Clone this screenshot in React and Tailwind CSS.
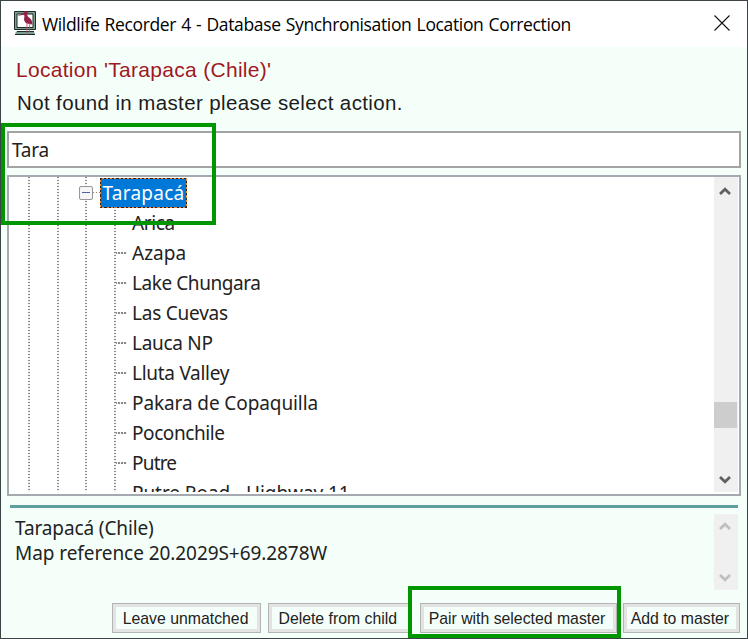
import React from "react";

const places = [
  { name: "Arica", spacing: "tracking-[-0.35px]" },
  { name: "Azapa", spacing: "tracking-[0px]" },
  { name: "Lake Chungara", spacing: "tracking-[-0.43px]" },
  { name: "Las Cuevas", spacing: "tracking-[-0.23px]" },
  { name: "Lauca NP", spacing: "tracking-[-0.3px]" },
  { name: "Lluta Valley", spacing: "tracking-[-0.28px]" },
  { name: "Pakara de Copaquilla", spacing: "tracking-[-0.1px]" },
  { name: "Poconchile", spacing: "tracking-[-0.42px]" },
  { name: "Putre", spacing: "tracking-[-0.8px]" },
  { name: "Putre Road - Highway 11", spacing: "tracking-[-0.07px]" },
];

const dotsY =
  "bg-[repeating-linear-gradient(to_bottom,#8a8a8a_0_1.5px,#f4f4f4_1.5px_3px)]";
const dotsX =
  "bg-[repeating-linear-gradient(to_right,#8a8a8a_0_1.5px,#f4f4f4_1.5px_3px)]";

const BirdIcon = () => (
  <svg width="24" height="26" viewBox="0 0 24 26" className="ml-3 mt-[9px] shrink-0">
    <path d="M1.500 1.500h21v18h-21z" fill="#7d9d90" stroke="#1d2b27" strokeWidth="1" />
    <path d="M4 4h16v13.500H4z" fill="#fff" stroke="#1d2b27" strokeWidth="1" />
    <path d="M3 21.500h18l1 3H2z" fill="#7d9d90" />
    <path d="M2 24.500h20M4 21.500h17" stroke="#1d2b27" strokeWidth="1" />
    <path
      d="M4.500 6.300c2-1.600 3.600-2.300 5.700-2.900C10.800 1.300 12 .6 13.300 1c1.600.5 1.700 2 1.200 3.400-.4 1.300.1 2 1.500 3 2.200 1.500 3.500 3.500 3.300 7.200-1.600-.8-3.800-.6-5.300-1.200-2.400-1-3.500-3.300-2.800-5.600.4-1.300.4-2.300-.5-3-2 .2-3.900.7-6.200 1.500z"
      fill="#94234a"
    />
    <path d="M14 13v12M16.800 13l-.5 9" stroke="#b5486b" strokeWidth=".8" />
  </svg>
);

const Arrow = ({ down, className }) => (
  <svg width="12" height="10" viewBox="0 0 12 10" className={className}>
    <path
      d={down ? "M1 2l5 4.800L11 2" : "M1 8l5-4.800L11 8"}
      fill="none"
      stroke="currentColor"
      strokeWidth="2.700"
    />
  </svg>
);

const ActionButton = ({ children, className }) => (
  <button
    className={`flex h-[30px] shrink-0 items-center justify-center whitespace-nowrap border border-[#b4b4b4] bg-[#f5fffa] pt-[2px] text-[17px] leading-[24px] text-[#222] shadow-[inset_0_0_0_3px_#e3e3e3] ${className}`}
  >
    <span className="inline-block scale-x-[0.93]">{children}</span>
  </button>
);

const App = () => {
  return (
    <div className="relative flex h-[639px] w-[748px] flex-col overflow-hidden border border-[#3b4346] bg-[#f5fffa] font-['Liberation_Sans',sans-serif]">
      <header className="flex h-[46px] shrink-0 bg-white">
        <BirdIcon />
        <h1 className="ml-[5px] mt-[9px] flex-1 whitespace-nowrap font-['Open_Sans',sans-serif] text-[17.500px] leading-[28px] tracking-[-0.36px] text-black [word-spacing:1px]">
          Wildlife Recorder 4 - Database Synchronisation Location Correction
        </h1>
        <svg width="16" height="16" viewBox="0 0 16 16" className="mr-[17px] mt-[14px]">
          <path d="M.5.5l15 15M15.500.5l-15 15" stroke="#111" strokeWidth="1.100" />
        </svg>
      </header>

      <p className="ml-[15px] mt-[8px] h-[33px] whitespace-nowrap text-[21px] leading-[30px] tracking-[0.3px] text-[#a01822]">
        Location 'Tarapaca (Chile)'
      </p>
      <p className="ml-[16px] h-[42px] whitespace-nowrap text-[20.500px] leading-[30px] tracking-[0.38px] text-[#1c1c1c]">
        Not found in master please select action.
      </p>

      <div className="ml-[6px] mt-px flex h-[37px] w-[734px] shrink-0 items-center border-2 border-[#a3a3a3] bg-white pl-[3px] pt-[2px] font-['Noto_Sans',sans-serif] text-[19px] tracking-[-0.2px] text-[#222]">
        Tara
      </div>

      <div className="ml-[6px] mt-[7px] flex h-[321px] w-[734px] shrink-0 justify-between border-2 border-[#a5aab0] bg-white font-['Noto_Sans',sans-serif] text-[19px] text-[#222]">
        <div className="relative mb-[2px] flex-1 overflow-hidden">
          <div className={`absolute left-[19px] top-0 h-full w-[1.500px] ${dotsY}`} />
          <div className={`absolute left-[48px] top-0 h-full w-[1.500px] ${dotsY}`} />
          <div className={`absolute left-[76px] top-0 h-full w-[1.500px] ${dotsY}`} />
          <div className={`absolute left-[105px] top-[30px] h-full w-[1.500px] ${dotsY}`} />
          <div className="flex h-[31px] items-center pl-[70px]">
            <div className="relative z-10 flex size-[14px] items-center justify-center rounded-[2px] border-[1.500px] border-[#969696] bg-[#f6f6f6]">
              <div className="h-[1.500px] w-2 bg-[#4a63a8]" />
            </div>
            <div className={`h-[1.500px] w-[7px] ${dotsX}`} />
            <div className="h-[30px] w-[87px] bg-[repeating-linear-gradient(135deg,#2a2018_0_1.5px,#f08a3c_1.5px_3px)] p-px">
              <div className="flex h-full items-center justify-center bg-[#0078d7] pt-[2px] tracking-[0.25px] text-white">
                Tarapacá
              </div>
            </div>
          </div>
          {places.map((place) => (
            <div key={place.name} className="flex h-[30px] items-center pl-[106px]">
              <div className={`mr-[5px] h-[1.500px] w-[12px] ${dotsX}`} />
              <span className={`whitespace-nowrap ${place.spacing}`}>{place.name}</span>
            </div>
          ))}
        </div>
        <div className="mb-[2px] mr-px flex w-[24px] flex-col items-center bg-[#f0f0f0] text-[#606060]">
          <Arrow className="mr-[2px] mt-[9px]" />
          <div className="mr-px mt-[206px] h-[26px] w-[23px] bg-[#cdcdcd]" />
          <Arrow down className="mr-[2px] mt-[47px]" />
        </div>
      </div>

      <div className="ml-[9px] mt-[9px] h-[3px] w-[728px] shrink-0 bg-[#5f9ea0]" />

      <div className="ml-[14px] mt-[6px] flex h-[76px] w-[723px] shrink-0 justify-between font-['Noto_Sans',sans-serif] text-[19px] leading-[25px] text-[#222]">
        <div className="whitespace-nowrap pt-[2px]">
          <p className="tracking-[-0.12px]">Tarapacá (Chile)</p>
          <p className="tracking-[-0.07px]">Map reference 20.2029S+69.2878W</p>
        </div>
        <div className="flex w-[24px] flex-col items-center justify-between bg-[#f0f0f0] py-[7px] text-[#bfbfbf]">
          <Arrow className="mr-[2px]" />
          <Arrow down className="mr-[2px]" />
        </div>
      </div>

      <div className="ml-[111px] mt-[13px] flex">
        <ActionButton className="w-[149px] pr-[2px]">Leave unmatched</ActionButton>
        <ActionButton className="ml-[7px] w-[144px] pr-[4px]">Delete from child</ActionButton>
        <ActionButton className="ml-[8px] w-[197px] pr-[3px]">Pair with selected master</ActionButton>
        <ActionButton className="ml-[6px] w-[117px] pr-[3px]">Add to master</ActionButton>
      </div>

      {/* highlight frames */}
      <div className="absolute left-0 top-[122px] h-[102px] w-[215px] border-4 border-[#009600]" />
      <div className="absolute left-[407px] top-[585px] h-[52px] w-[213px] border-4 border-[#009600]" />
    </div>
  );
};

export default App;
